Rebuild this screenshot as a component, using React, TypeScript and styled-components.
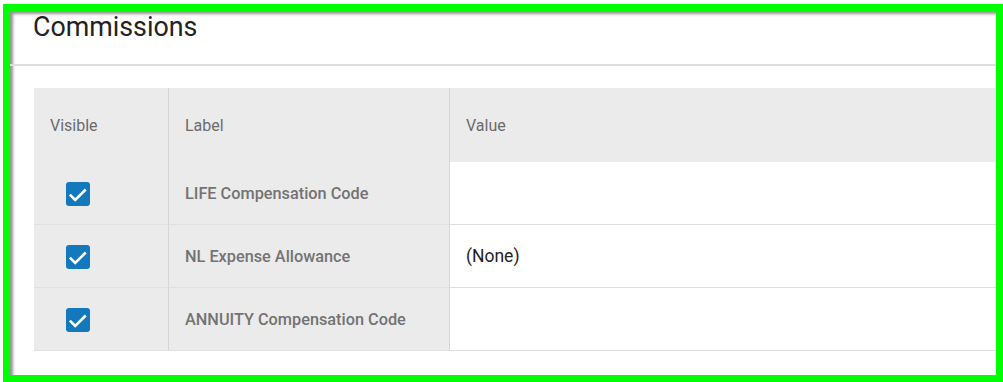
import React from "react";
import styled, { createGlobalStyle } from "styled-components";

const GlobalStyle = createGlobalStyle`
  html, body {
    margin: 0;
    padding: 0;
    background: #ffffff;
    font-family: Roboto, "Liberation Sans", Arial, sans-serif;
  }
`;

const Frame = styled.div`
  box-sizing: border-box;
  margin: 4px 0 0 3px;
  width: 1000px;
  height: 378px;
  border: 7px solid #00ff00;
  overflow: hidden;
  position: relative;
  background: #ffffff;
  box-shadow: inset 4px 4px 3px -1px rgba(0, 0, 0, 0.42);
  display: flex;
  flex-direction: column;
`;

const Header = styled.div`
  height: 53px;
  padding: 0 0 0 23px;
  border-bottom: 2px solid #dedede;
  display: flex;
  align-items: flex-start;
`;

const Title = styled.h1`
  margin: 1px 0 0 0;
  font-size: 26.8px;
  line-height: 30px;
  font-weight: 400;
  color: #222222;
`;

const Body = styled.div`
  padding: 22px 0 0 24px;
`;

const Grid = styled.div`
  display: grid;
  grid-template-columns: 135px 281px 1fr;
  grid-template-rows: 74px repeat(3, 63px);
`;

const HeadCell = styled.div<{ $divider?: boolean }>`
  background: #ebebeb;
  border-right: ${(p) => (p.$divider ? "1px solid #d6d6d6" : "none")};
  display: flex;
  align-items: center;
  padding-left: 16px;
  font-size: 16px;
  color: #6b6b6b;
`;

const Cell = styled.div<{ $shade?: boolean; $divider?: boolean; $indent?: number }>`
  box-sizing: border-box;
  background: ${(p) => (p.$shade ? "#ebebeb" : "#ffffff")};
  border-right: ${(p) => (p.$divider ? "1px solid #d6d6d6" : "none")};
  border-bottom: 1px solid ${(p) => (p.$shade ? "#e0e0e0" : "#dedede")};
  display: flex;
  align-items: center;
  padding-left: ${(p) => p.$indent ?? 16}px;
`;

const LabelText = styled.span`
  font-size: 16.3px;
  font-weight: 500;
  color: #737373;
`;

const ValueText = styled.span`
  font-size: 17.5px;
  color: #222222;
`;

const CheckBox = () => (
  <svg width="24" height="24" viewBox="0 0 24 24" style={{ display: "block", marginTop: 2 }}>
    <rect x="0" y="0" width="24" height="24" rx="3" fill="#1478bd" />
    <path
      d="M4.8 13.6 L9.2 18 L18.8 8.4"
      fill="none"
      stroke="#ffffff"
      strokeWidth="2.6"
      strokeLinecap="square"
    />
  </svg>
);

const rows = [
  { label: "LIFE Compensation Code", value: "" },
  { label: "NL Expense Allowance", value: "(None)" },
  { label: "ANNUITY Compensation Code", value: "" },
];

export default function App() {
  return (
    <>
      <GlobalStyle />
      <Frame>
        <Header>
          <Title>Commissions</Title>
        </Header>
        <Body>
          <Grid>
            <HeadCell $divider>Visible</HeadCell>
            <HeadCell $divider>Label</HeadCell>
            <HeadCell>Value</HeadCell>
            {rows.map((r) => (
              <React.Fragment key={r.label}>
                <Cell $shade $divider $indent={32}>
                  <CheckBox />
                </Cell>
                <Cell $shade $divider>
                  <LabelText>{r.label}</LabelText>
                </Cell>
                <Cell>
                  <ValueText>{r.value}</ValueText>
                </Cell>
              </React.Fragment>
            ))}
          </Grid>
        </Body>
      </Frame>
    </>
  );
}
